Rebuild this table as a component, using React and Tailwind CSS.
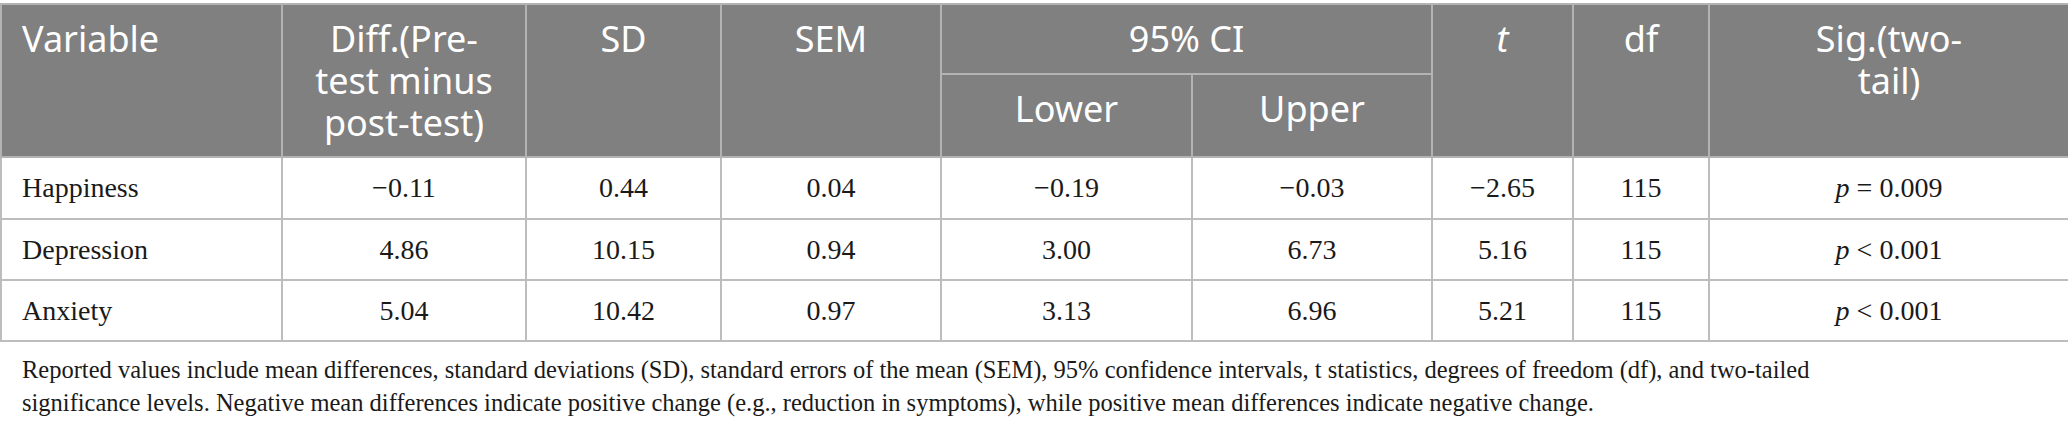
import React from "react";

const rows = [
    { name: "Happiness", diff: "−0.11", sd: "0.44", sem: "0.04", lower: "−0.19", upper: "−0.03", t: "−2.65", df: "115", op: "=", p: "0.009", h: "h-[62px]" },
    { name: "Depression", diff: "4.86", sd: "10.15", sem: "0.94", lower: "3.00", upper: "6.73", t: "5.16", df: "115", op: "<", p: "0.001", h: "h-[61px]" },
    { name: "Anxiety", diff: "5.04", sd: "10.42", sem: "0.97", lower: "3.13", upper: "6.96", t: "5.21", df: "115", op: "<", p: "0.001", h: "h-[61px]" },
];

const th = "bg-[#808080] text-white font-normal border-2 border-[#b3b3b3] align-top pt-[13px] px-5 text-center";
const td = "border-2 border-[#bdbdbd] px-5 text-center align-middle";

export default function App() {
    return (
        <div className="w-[2068px] h-[431px] bg-white pt-[3px] overflow-hidden">
            <table className="table-fixed border-collapse w-[2068px]">
                <colgroup>
                    <col className="w-[281px]" />
                    <col className="w-[244px]" />
                    <col className="w-[195px]" />
                    <col className="w-[220px]" />
                    <col className="w-[251px]" />
                    <col className="w-[240px]" />
                    <col className="w-[141px]" />
                    <col className="w-[136px]" />
                    <col className="w-[360px]" />
                </colgroup>
                <thead className="font-['Noto_Sans',sans-serif] text-[36px] leading-[42px]">
                    <tr className="h-[70px]">
                        <th rowSpan={2} className={th + " !text-left"}>Variable</th>
                        <th rowSpan={2} className={th}>Diff.(Pre-<br />test minus<br />post-test)</th>
                        <th rowSpan={2} className={th}>SD</th>
                        <th rowSpan={2} className={th}>SEM</th>
                        <th colSpan={2} className={th}>95% CI</th>
                        <th rowSpan={2} className={th}><span className="italic">t</span></th>
                        <th rowSpan={2} className={th}>df</th>
                        <th rowSpan={2} className={th}>Sig.(two-<br />tail)</th>
                    </tr>
                    <tr className="h-[83px]">
                        <th className={th}>Lower</th>
                        <th className={th}>Upper</th>
                    </tr>
                </thead>
                <tbody className="font-['Liberation_Serif',serif] text-[28px] text-[#1a1a1a]">
                    {rows.map((r) => (
                        <tr key={r.name} className={r.h}>
                            <td className={td + " !text-left"}>{r.name}</td>
                            <td className={td}>{r.diff}</td>
                            <td className={td}>{r.sd}</td>
                            <td className={td}>{r.sem}</td>
                            <td className={td}>{r.lower}</td>
                            <td className={td}>{r.upper}</td>
                            <td className={td}>{r.t}</td>
                            <td className={td}>{r.df}</td>
                            <td className={td}><span className="italic">p</span> {r.op} {r.p}</td>
                        </tr>
                    ))}
                </tbody>
            </table>
            <p className="font-['Liberation_Serif',serif] text-[24.5px] leading-[33px] text-[#1a1a1a] pl-[22px] mt-[11px]">
                Reported values include mean differences, standard deviations (SD), standard errors of the mean (SEM), 95% confidence intervals, t statistics, degrees of freedom (df), and two-tailed
                <br />
                significance levels. Negative mean differences indicate positive change (e.g., reduction in symptoms), while positive mean differences indicate negative change.
            </p>
        </div>
    );
}
